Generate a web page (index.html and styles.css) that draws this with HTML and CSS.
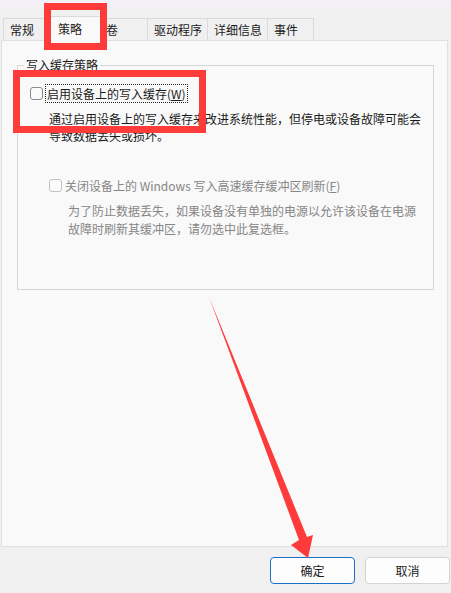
FILE: index.html
```html
<!DOCTYPE html>
<html lang="zh-CN">
<head>
<meta charset="utf-8">
<title>属性 - 策略</title>
<link rel="stylesheet" href="styles.css">
</head>
<body>
<div class="window">
  <div class="topstrip"></div>
  <div class="tabs">
    <div class="tab tab-general">常规</div>
    <div class="tab tab-policy selected">策略</div>
    <div class="tab tab-volume">卷</div>
    <div class="tab tab-driver">驱动程序</div>
    <div class="tab tab-details">详细信息</div>
    <div class="tab tab-events">事件</div>
  </div>
  <div class="panel">
    <fieldset class="group">
      <legend class="group-title">写入缓存策略</legend>
      <div class="option">
        <span class="check"></span>
        <span class="option-label focused">启用设备上的写入缓存(<u>W</u>)</span>
      </div>
      <p class="desc desc-1">通过启用设备上的写入缓存来改进系统性能，但停电或设备故障可能会导致数据丢失或损坏。</p>
      <div class="option option-2 disabled">
        <span class="check"></span>
        <span class="option-label">关闭设备上的 Windows 写入高速缓存缓冲区刷新(<u>F</u>)</span>
      </div>
      <p class="desc desc-2 disabled">为了防止数据丢失，如果设备没有单独的电源以允许该设备在电源故障时刷新其缓冲区，请勿选中此复选框。</p>
    </fieldset>
  </div>
  <div class="buttons">
    <button class="btn primary">确定</button>
    <button class="btn">取消</button>
  </div>

  <div class="mark mark-tab"></div>
  <div class="mark mark-option"></div>
  <svg class="arrow" width="451" height="593" viewBox="0 0 451 593">
    <polygon points="209,297 307,537 313,535 308,558 291,545 299,540" fill="#fe3b3b"/>
  </svg>
</div>
</body>
</html>
```
FILE: styles.css
```css
* { box-sizing: border-box; }
html, body {
  margin: 0;
  padding: 0;
}
body {
  width: 451px;
  height: 593px;
  overflow: hidden;
  background: #f0f0f0;
  font-family: "Noto Sans CJK SC", "Noto Sans", sans-serif;
  font-size: 12px;
  color: #1b1b1b;
}
.window {
  position: relative;
  width: 451px;
  height: 593px;
  display: flex;
  flex-direction: column;
}
.topstrip {
  height: 7px;
  background: #f3f1f7;
}
.tabs {
  margin-top: 11px;
  height: 22px;
  display: flex;
  align-items: flex-end;
  padding-left: 3px;
  position: relative;
  z-index: 1;
}
.tab {
  height: 22px;
  line-height: 21px;
  padding-left: 6px;
  border: 1px solid #dadada;
  border-bottom: none;
  background: #f0f0f0;
  margin-left: -1px;
  white-space: nowrap;
}
.tab:first-child { margin-left: 0; }
.tab-general { width: 42px; }
.tab-policy { width: 57px; }
.tab-volume { width: 48px; padding-left: 5px; }
.tab-driver { width: 61px; }
.tab-details { width: 61px; }
.tab-events { width: 47px; }
.tab.selected {
  height: 25px;
  margin-bottom: -1px;
  background: #f9f9f9;
  padding-left: 13px;
  line-height: 24px;
  position: relative;
  z-index: 2;
  padding-bottom: 2px;
}
.panel {
  margin: 0 3px 0 1px;
  height: 507px;
  border: 1px solid #e0e0e0;
  background: #f9f9f9;
  padding-top: 16px;
}
.group {
  margin: 0 13px 0 15px;
  padding: 0 0 51px 0;
  border: 1px solid #d6d6d6;
  min-width: 0;
}
.group-title {
  margin-left: 6px;
  padding: 0 2px;
  line-height: 16px;
  color: #1b1b1b;
}
.option {
  display: flex;
  align-items: center;
  margin-top: 11px;
  margin-left: 12px;
  height: 19px;
}
.check {
  width: 13px;
  height: 13px;
  border: 1px solid #8b8b8b;
  border-radius: 3px;
  background: #fbfbfb;
  flex: none;
}
.option-label {
  margin-left: 2px;
  line-height: 17px;
  padding: 0 1px;
  border: 1px solid transparent;
  white-space: nowrap;
}
.option-label.focused {
  border: 1px dotted #222;
}
.desc {
  margin: 7px 10px 0 31px;
  line-height: 17px;
}
.option-2 {
  margin-top: 32px;
  margin-left: 31px;
}
.option-2 .option-label {
  margin-left: 1px;
}
.disabled { color: #868686; }
.disabled .check {
  border-color: #c2c2c2;
}
.desc-2 {
  margin: 7px 14px 0 50px;
  line-height: 18px;
}
.buttons {
  margin-top: 10px;
  display: flex;
  justify-content: flex-end;
  gap: 10px;
  padding-right: 1px;
}
.btn {
  width: 85px;
  height: 27px;
  border: 1px solid #d3d3d3;
  border-radius: 4px;
  background: #fdfdfd;
  font-family: inherit;
  font-size: 12px;
  color: #1b1b1b;
  padding: 0;
}
.btn.primary {
  border-color: #1a6fc4;
}
.mark {
  position: absolute;
  border: 7px solid #fe3b3b;
  pointer-events: none;
  z-index: 5;
}
.mark-tab {
  left: 44px;
  top: 3px;
  width: 63px;
  height: 47px;
}
.mark-option {
  left: 13px;
  top: 70px;
  width: 193px;
  height: 63px;
}
.arrow {
  position: absolute;
  left: 0;
  top: 0;
  pointer-events: none;
  z-index: 6;
}
```
